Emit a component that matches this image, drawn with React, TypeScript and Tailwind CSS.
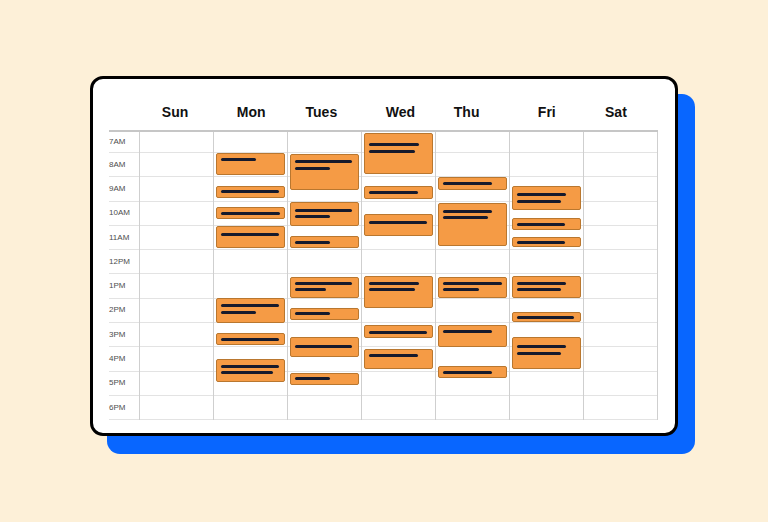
import React from 'react';

interface CalEvent {
  top: number;
  bottom: number;
  y: number;
  lines: number[];
}

interface Day {
  name: string;
  nudge: string;
  events: CalEvent[];
}

const hours = ['7AM', '8AM', '9AM', '10AM', '11AM', '12PM', '1PM', '2PM', '3PM', '4PM', '5PM', '6PM'];

// top/bottom are page px of the event box, y is the first bar's centre from the box top
const days: Day[] = [
  { name: 'Sun', nudge: '-translate-x-px', events: [] },
  {
    name: 'Mon',
    nudge: 'translate-x-px',
    events: [
      { top: 153.3, bottom: 174.7, y: 6, lines: [35] },
      { top: 186.3, bottom: 198.3, y: 5.7, lines: [57.5] },
      { top: 207, bottom: 219.3, y: 6.3, lines: [59] },
      { top: 225.7, bottom: 248.3, y: 9, lines: [57.5] },
      { top: 298.3, bottom: 322.7, y: 7.4, lines: [57.5, 35] },
      { top: 333, bottom: 345, y: 6, lines: [57.5] },
      { top: 359, bottom: 381.7, y: 7, lines: [57.5, 52] },
    ],
  },
  {
    name: 'Tues',
    nudge: '-translate-x-[3px]',
    events: [
      { top: 154.3, bottom: 190, y: 7.7, lines: [57, 34.7] },
      { top: 202.3, bottom: 225.7, y: 8, lines: [57, 34.7] },
      { top: 236, bottom: 247.5, y: 6, lines: [34.7] },
      { top: 276.7, bottom: 297.7, y: 6.6, lines: [57, 30.7] },
      { top: 308.3, bottom: 320.3, y: 5.7, lines: [34.7] },
      { top: 337.3, bottom: 357, y: 9.4, lines: [57] },
      { top: 373.3, bottom: 385.3, y: 5.4, lines: [34.7] },
    ],
  },
  {
    name: 'Wed',
    nudge: 'translate-x-[2px]',
    events: [
      { top: 133.3, bottom: 174.3, y: 11.4, lines: [49.8, 45.5] },
      { top: 186.3, bottom: 198.7, y: 6.4, lines: [49.2] },
      { top: 214, bottom: 235.7, y: 8.7, lines: [57.8] },
      { top: 275.7, bottom: 307.7, y: 7.6, lines: [49.8, 45.5] },
      { top: 325.3, bottom: 338.3, y: 7.4, lines: [57.8] },
      { top: 349, bottom: 369, y: 6.7, lines: [48.8] },
    ],
  },
  {
    name: 'Thu',
    nudge: '-translate-x-[6px]',
    events: [
      { top: 177.3, bottom: 189.7, y: 6.7, lines: [49.4] },
      { top: 203, bottom: 245.7, y: 8, lines: [49.4, 44.7] },
      { top: 276.7, bottom: 298, y: 6.6, lines: [58.7, 35.7] },
      { top: 325.3, bottom: 346.7, y: 6.7, lines: [49.4] },
      { top: 365.7, bottom: 377.7, y: 6.6, lines: [49.4] },
    ],
  },
  {
    name: 'Fri',
    nudge: '',
    events: [
      { top: 186.3, bottom: 209.7, y: 8.4, lines: [49, 44.4] },
      { top: 217.7, bottom: 230.3, y: 7, lines: [48.4] },
      { top: 237, bottom: 246.7, y: 5.7, lines: [48.4] },
      { top: 276.3, bottom: 297.7, y: 7, lines: [49, 44.4] },
      { top: 312.3, bottom: 321.7, y: 5.4, lines: [56.7] },
      { top: 337.3, bottom: 369, y: 9.4, lines: [49, 44.4] },
    ],
  },
  { name: 'Sat', nudge: '-translate-x-[5px]', events: [] },
];

const GRID_TOP = 132;

const RowCells: React.FC = () => (
  <>
    {hours.map((h, i) => (
      <div
        key={h}
        className={`border-b border-[#e3e3e3] ${i === 0 ? 'h-[21px]' : 'h-[24.3px]'}`}
      />
    ))}
  </>
);

const EventBox: React.FC<{ ev: CalEvent }> = ({ ev }) => (
  <div
    className="absolute left-[2px] right-[2px] flex flex-col gap-[3.5px] rounded-[2px] border border-[#b9772f] bg-[#f59b45] pl-[4px]"
    style={{ top: ev.top - GRID_TOP, height: ev.bottom - ev.top, paddingTop: ev.y - 2.5 }}
  >
    {ev.lines.map((w, i) => (
      <div key={i} className="h-[3px] shrink-0 rounded-full bg-[#161a2c]" style={{ width: w }} />
    ))}
  </div>
);

export default function App() {
  return (
    <div className="flex h-[522px] w-full justify-center bg-[#fdf0d8] pt-[76px] font-['Liberation_Sans',Arial,sans-serif]">
      <div className="flex h-[360px] w-[588px] flex-col rounded-[13px] border-[3px] border-black bg-white pl-[16px] pr-[17px] shadow-[17px_18px_0_0_#0866ff]">
        {/* day header */}
        <div className="flex h-[51px] items-end pb-[9px]">
          <div className="w-[30px] shrink-0" />
          {days.map((d) => (
            <div key={d.name} className="flex flex-1 justify-center">
              <span className={`text-[14px] font-bold leading-[18px] text-[#111] ${d.nudge}`}>{d.name}</span>
            </div>
          ))}
        </div>

        {/* grid */}
        <div className="flex border-t-2 border-[#c6c6c6]">
          <div className="w-[30px] shrink-0">
            {hours.map((h, i) => (
              <div
                key={h}
                className={`flex items-center border-b border-[#e3e3e3] text-[8px] leading-none text-[#4d4d4d] ${i === 0 ? 'h-[21px]' : 'h-[24.3px]'}`}
              >
                {h}
              </div>
            ))}
          </div>
          {days.map((d, i) => (
            <div
              key={d.name}
              className={`relative flex-1 border-l border-[#cfcfcf] ${i === days.length - 1 ? 'border-r' : ''}`}
            >
              <RowCells />
              {d.events.map((ev, j) => (
                <EventBox key={j} ev={ev} />
              ))}
            </div>
          ))}
        </div>
      </div>
    </div>
  );
}
